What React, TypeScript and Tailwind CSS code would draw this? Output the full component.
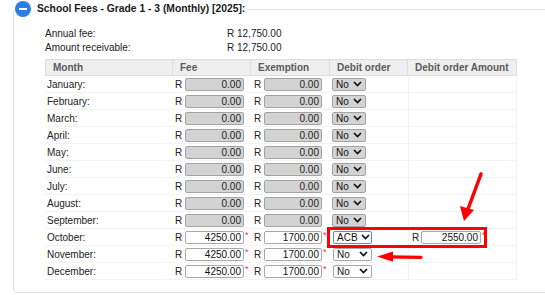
import React from "react";

const months = [
  "January", "February", "March", "April", "May", "June",
  "July", "August", "September", "October", "November", "December",
];

function Chevron() {
  return (
    <svg width="9" height="6" viewBox="0 0 9 6" className="shrink-0">
      <path d="M1 1 L4.5 4.5 L8 1" fill="none" stroke="#111" strokeWidth="1.7" />
    </svg>
  );
}

function Money({ value, enabled, width, req }: { value: string; enabled: boolean; width: string; req?: boolean }) {
  return (
    <div className="flex items-center">
      <div
        className={
          "h-[13px] rounded-[2px] border text-right pr-[2px] leading-[11px] " +
          width +
          (enabled ? " bg-white border-[#a8a8a8] text-[#111]" : " bg-[#d3d3d3] border-[#a3a3a3] text-[#222]")
        }
      >
        {value}
      </div>
      {req ? <span className="self-start ml-[1px] text-[9px] leading-[9px] text-[#ff2a2a]">*</span> : null}
    </div>
  );
}

export default function App() {
  return (
    <div className="w-[545px] h-[295px] overflow-hidden bg-white font-['Liberation_Sans',Arial,sans-serif] text-[10px] text-[#222] relative">
      <fieldset className="ml-[13px] mt-[1px] w-[560px] border border-[#e2e2e2] rounded-[4px] p-0 m-0">
        <legend className="ml-[1px] flex items-center h-[16px] pr-[2px]">
          <span className="w-[16px] h-[16px] rounded-full bg-[#2b7fe3] flex items-center justify-center">
            <span className="w-[8px] h-[2px] bg-white block" />
          </span>
          <span className="ml-[6px] font-bold text-[10.3px] text-[#1a1a1a]">
            School Fees - Grade 1 - 3 (Monthly) [2025]:
          </span>
        </legend>
        <div className="pl-[31px] pt-[9px] pb-[12px]">
          <div className="flex h-[14px] items-center">
            <span className="w-[182px]">Annual fee:</span>
            <span>R 12,750.00</span>
          </div>
          <div className="flex h-[14px] items-center">
            <span className="w-[182px]">Amount receivable:</span>
            <span>R 12,750.00</span>
          </div>
          <div className="mt-[5px] grid grid-cols-[128px_78px_79px_78px_109px] w-[472px]">
            {["Month", "Fee", "Exemption", "Debit order", "Debit order Amount"].map((h, i) => (
              <div
                key={h}
                className={
                  "h-[17px] flex items-center pl-[7px] bg-[#efefef] border-t border-b border-[#dedede] font-bold text-[#5a5a5a] " +
                  (i === 0 ? "border-l " : "") +
                  "border-r"
                }
              >
                {h}
              </div>
            ))}
            {months.map((m, i) => {
              const en = i >= 9;
              return (
                <React.Fragment key={m}>
                  <div className="h-[17px] flex items-center pl-[2px] border-b border-[#f3f3f3]">{m}:</div>
                  <div className="h-[17px] flex items-center pl-[2px] border-b border-[#f3f3f3]">
                    <span className="w-[10px]">R</span>
                    <Money value={en ? "4250.00" : "0.00"} enabled={en} width="w-[59px]" req={en} />
                  </div>
                  <div className="h-[17px] flex items-center pl-[3px] border-b border-[#f3f3f3]">
                    <span className="w-[10px]">R</span>
                    <Money value={en ? "1700.00" : "0.00"} enabled={en} width="w-[58px]" req={en} />
                  </div>
                  <div className="h-[17px] flex items-center pl-[2px] border-b border-[#f3f3f3]">
                    {!en ? (
                      <div className="h-[13px] w-[34px] rounded-[2px] border border-[#a3a3a3] bg-[#d3d3d3] flex items-center pl-[3px] gap-[4px] text-[#111]">
                        <span>No</span>
                        <Chevron />
                      </div>
                    ) : i === 9 ? (
                      <div className="ml-[1px] h-[13px] w-[39px] rounded-[2px] border border-[#4d8fe0] bg-white flex items-center pl-[3px] gap-[3px] text-[#111]">
                        <span>ACB</span>
                        <Chevron />
                      </div>
                    ) : (
                      <div className="ml-[1px] h-[13px] w-[39px] rounded-[2px] border border-[#a8a8a8] bg-white flex items-center justify-between pl-[3px] pr-[3px] text-[#111]">
                        <span>No</span>
                        <Chevron />
                      </div>
                    )}
                  </div>
                  <div className="h-[17px] flex items-center pl-[3px] border-b border-x border-[#f3f3f3]">
                    {i === 9 ? (
                      <>
                        <span className="w-[9px]">R</span>
                        <Money value="2550.00" enabled width="w-[60px]" req />
                      </>
                    ) : null}
                  </div>
                </React.Fragment>
              );
            })}
          </div>
        </div>
      </fieldset>
      <div className="absolute left-[327px] top-[227px] w-[160px] h-[21px] border-[3px] border-[#ff0000]" />
      <svg className="absolute left-0 top-0 pointer-events-none" width="545" height="295">
        <line x1="481" y1="174" x2="468" y2="209" stroke="#ff0000" strokeWidth="3.5" strokeLinecap="round" />
        <polygon points="464,221 460,206 474,210" fill="#ff0000" />
        <line x1="421" y1="257.3" x2="390" y2="256.8" stroke="#ff0000" strokeWidth="3.2" strokeLinecap="round" />
        <polygon points="377,256.6 393,251.5 393,261.8" fill="#ff0000" />
      </svg>
    </div>
  );
}
